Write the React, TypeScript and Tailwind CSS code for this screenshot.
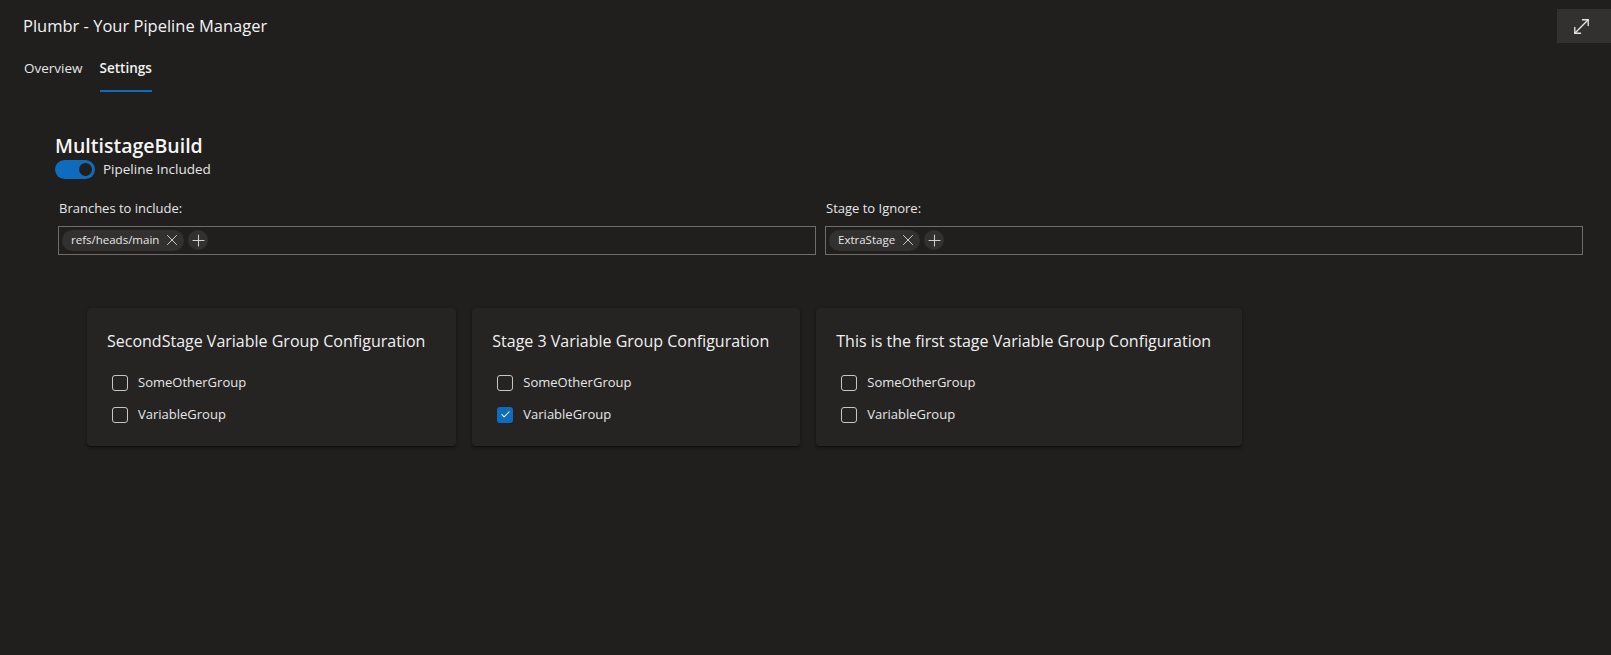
import React from "react";
import { MoveDiagonal, X, Plus, Check } from "lucide-react";

const font = { fontFamily: '"Segoe UI", "Open Sans", "Noto Sans", sans-serif' };

function Chip({ label }: { label: string }) {
  return (
    <div className="flex items-center gap-[4px]">
      <div className="flex h-[21px] items-center gap-[4px] rounded-full bg-[#323130] pl-[9px] pr-[3px] text-[11.5px] text-[#e6e6e6]">
        <span>{label}</span>
        <X size={18} strokeWidth={1.3} className="text-[#d0d0d0]" />
      </div>
      <div className="flex h-[20px] w-[20px] items-center justify-center rounded-full bg-[#323130]">
        <Plus size={19} strokeWidth={1.3} className="text-[#d0d0d0]" />
      </div>
    </div>
  );
}

function Field({ label, chip }: { label: string; chip: string }) {
  return (
    <div className="flex flex-col">
      <div className="pl-[1px] text-[13px] leading-[18px] text-[#e6e6e6]">{label}</div>
      <div className="mt-[9px] flex h-[29px] items-center border border-[#6e6d6c] pl-[3px]">
        <Chip label={chip} />
      </div>
    </div>
  );
}

function CheckRow({ label, checked }: { label: string; checked?: boolean }) {
  return (
    <div className="flex h-[16px] items-center gap-[10px]">
      {checked ? (
        <div className="flex h-[16px] w-[16px] items-center justify-center rounded-[3px] bg-[#0f6cbd]">
          <Check size={11} strokeWidth={2.2} className="text-white" />
        </div>
      ) : (
        <div className="h-[16px] w-[16px] rounded-[3px] border border-[#c8c6c4]" />
      )}
      <span className="text-[13px] text-[#e6e6e6]">{label}</span>
    </div>
  );
}

function Card({ title, checkedSecond }: { title: string; checkedSecond?: boolean }) {
  return (
    <div className="rounded-[4px] bg-[#252423] pb-[23px] pl-[20px] pr-[31px] pt-[21px] shadow-[0_1.6px_3.6px_rgba(0,0,0,0.35),0_0.3px_0.9px_rgba(0,0,0,0.25)]">
      <div className="text-[16px] leading-[24px] text-[#f0f0f0]">{title}</div>
      <div className="mt-[22px] flex flex-col gap-[16px] pl-[5px]">
        <CheckRow label="SomeOtherGroup" />
        <CheckRow label="VariableGroup" checked={checkedSecond} />
      </div>
    </div>
  );
}

export default function App() {
  return (
    <div className="min-h-screen w-full bg-[#201f1e] text-[#f0f0f0]" style={font}>
      <div className="flex items-start justify-between">
        <h1 className="pl-[23px] pt-[14px] text-[16.5px] leading-[24px] text-[#f3f3f3]">
          Plumbr - Your Pipeline Manager
        </h1>
        <button className="mt-[9px] flex h-[34px] w-[54px] items-center justify-center bg-[#323130] pr-[6px]">
          <MoveDiagonal size={23} strokeWidth={1.4} className="text-[#e6e6e6]" />
        </button>
      </div>

      <div className="mt-[15px] flex gap-[17px] pl-[24px] text-[13.5px]">
        <div className="pb-[14px] text-[#e6e6e6]">Overview</div>
        <div className="border-b-[2px] border-[#0f6cbd] pb-[12px] font-semibold text-[#f3f3f3]">Settings</div>
      </div>

      <div className="pl-[55px] pt-[42px]">
        <div className="text-[19.5px] font-semibold leading-[24px] text-[#f5f5f5]">MultistageBuild</div>
        <div className="mt-[1px] flex items-center gap-[8px]">
          <div className="flex h-[19px] w-[40px] items-center justify-end rounded-full bg-[#0f6cbd] pr-[3px]">
            <div className="h-[13px] w-[13px] rounded-full bg-[#201f1e]" />
          </div>
          <span className="text-[13.5px] text-[#e6e6e6]">Pipeline Included</span>
        </div>
      </div>

      <div className="ml-[58px] mr-[28px] mt-[19px] grid grid-cols-2 gap-[9px]">
        <Field label="Branches to include:" chip="refs/heads/main" />
        <Field label="Stage to Ignore:" chip="ExtraStage" />
      </div>

      <div className="ml-[87px] mt-[53px] flex items-start gap-[16px]">
        <Card title="SecondStage Variable Group Configuration" />
        <Card title="Stage 3 Variable Group Configuration" checkedSecond />
        <Card title="This is the first stage Variable Group Configuration" />
      </div>
    </div>
  );
}
